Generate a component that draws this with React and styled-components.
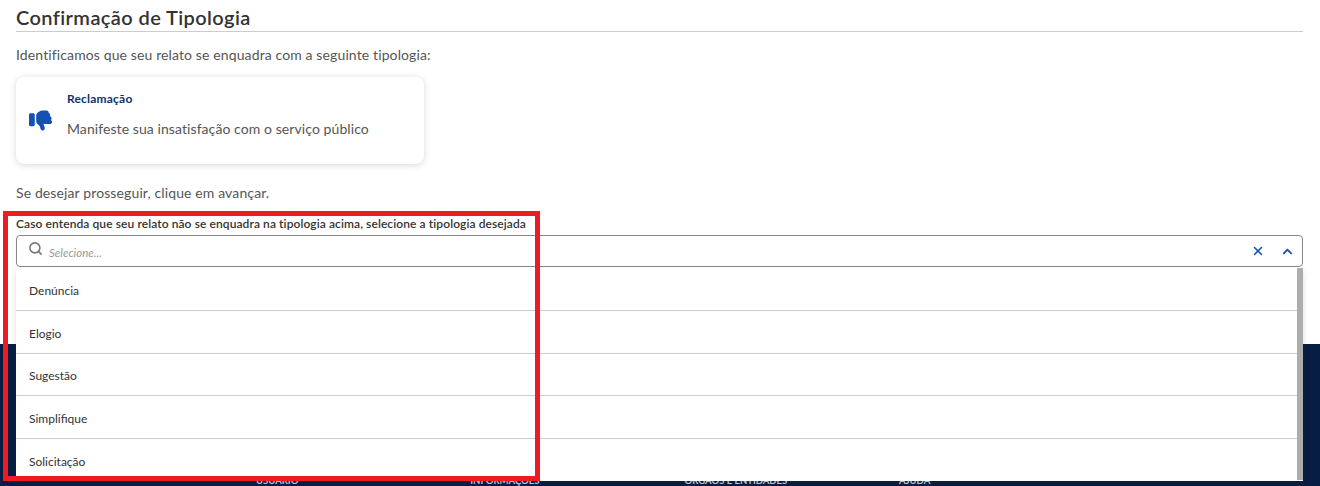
import React from 'react'
import styled, { createGlobalStyle } from 'styled-components'
import { FaThumbsDown } from 'react-icons/fa6'
import { FaChevronUp } from 'react-icons/fa'
import { Search, X } from 'lucide-react'

const GlobalStyle = createGlobalStyle`
  html, body {
    margin: 0;
    padding: 0;
    height: 486px;
    overflow: hidden;
    background: #fff;
    font-family: 'Lato', 'Open Sans', sans-serif;
    color: #333;
  }
  * { box-sizing: border-box; }
`

const Page = styled.div`
  position: relative;
  width: 1320px;
  height: 486px;
  overflow: hidden;
`

const Main = styled.main`
  height: 344px;
  padding: 5px 17px 0 16px;
`

const Title = styled.h2`
  margin: 0;
  height: 27px;
  border-bottom: 1px solid #ccc;
  font-size: 20px;
  line-height: 24px;
  font-weight: 600;
  letter-spacing: 0.4px;
  color: #333;
`

const Text = styled.p`
  margin: ${p => p.$margin};
  font-size: 14px;
  line-height: 20px;
  letter-spacing: 0.12px;
  color: #555;
`

const Card = styled.div`
  display: flex;
  align-items: center;
  width: 408px;
  height: 87px;
  margin-top: 12px;
  padding: 0 13px;
  background: #fff;
  border-radius: 8px;
  box-shadow: 0 1px 6px rgba(51, 51, 51, 0.2);
`

const CardIcon = styled(FaThumbsDown)`
  flex: none;
  width: 23px;
  height: 23px;
  margin-right: 15px;
  color: #1351b4;
`

const CardBody = styled.div`
  display: flex;
  flex-direction: column;
  height: 87px;
  padding-top: 14px;
`

const CardTitle = styled.span`
  font-size: 12px;
  line-height: 16px;
  font-weight: 700;
  letter-spacing: 0.2px;
  color: #0c326f;
`

const CardText = styled.span`
  margin-top: 12px;
  font-size: 14px;
  line-height: 20px;
  letter-spacing: 0.08px;
  color: #555;
`

const Field = styled.div`
  position: relative;
  margin-top: 12px;
`

const Label = styled.label`
  display: block;
  height: 20px;
  font-size: 12px;
  line-height: 17px;
  font-weight: 600;
  letter-spacing: 0.09px;
  color: #333;
`

const InputBox = styled.div`
  display: flex;
  align-items: center;
  height: 32px;
  padding: 0 9.5px 0 13px;
  border: 1px solid #888;
  border-radius: 4px;
  background: #fff;
`

const SearchIcon = styled(Search)`
  flex: none;
  width: 15px;
  height: 15px;
  margin: -5px 5px 0 -2px;
  color: #777;
`

const Placeholder = styled.span`
  flex: 1;
  padding: 3px 0 0 1px;
  font-size: 11.5px;
  font-style: italic;
  color: #999;
`

const IconButton = styled.span`
  display: flex;
  margin-left: ${p => p.$gap || 0}px;
  color: #1351b4;
  font-size: ${p => p.$size}px;
`

const Menu = styled.ul`
  position: absolute;
  top: 53px;
  left: 0;
  right: 0;
  height: 213px;
  margin: 0;
  padding: 0 6px 0 0;
  list-style: none;
  overflow: hidden;
  background: #fff;
  box-shadow: 0 3px 6px rgba(51, 51, 51, 0.16);
  z-index: 2;
`

const Scrollbar = styled.span`
  position: absolute;
  top: 0;
  right: 0;
  bottom: 1px;
  width: 6px;
  background: #adadad;
`

const Option = styled.li`
  display: flex;
  align-items: center;
  height: 42.75px;
  padding: 3px 13px 0;
  border-bottom: 1px solid #ccc;
  font-size: 12px;
  color: #333;
  &:last-of-type { border-bottom: 0; }
`

const Footer = styled.footer`
  height: 142px;
  background: #071d41;
  padding: 130px 0 0 256px;
  display: flex;
`

const FooterHead = styled.span`
  width: 214.3px;
  font-size: 9.5px;
  line-height: 14px;
  font-weight: 700;
  color: #c5d4eb;
  text-transform: uppercase;
`

const Highlight = styled.div`
  position: absolute;
  left: 3px;
  top: 211px;
  width: 537px;
  height: 270px;
  border: 5px solid #ed1c24;
  pointer-events: none;
  z-index: 3;
`

const options = ['Denúncia', 'Elogio', 'Sugestão', 'Simplifique', 'Solicitação']
const footerHeads = ['Usuário', 'Informações', 'Órgãos e Entidades', 'Ajuda']

const App = () => {
  return (
    <Page>
      <GlobalStyle />
      <Main>
        <Title>Confirmação de Tipologia</Title>
        <Text $margin="13px 0 0">Identificamos que seu relato se enquadra com a seguinte tipologia:</Text>
        <Card>
          <CardIcon />
          <CardBody>
            <CardTitle>Reclamação</CardTitle>
            <CardText>Manifeste sua insatisfação com o serviço público</CardText>
          </CardBody>
        </Card>
        <Text $margin="19px 0 0">Se desejar prosseguir, clique em avançar.</Text>
        <Field>
          <Label>Caso entenda que seu relato não se enquadra na tipologia acima, selecione a tipologia desejada</Label>
          <InputBox>
            <SearchIcon strokeWidth={2.5} />
            <Placeholder>Selecione...</Placeholder>
            <IconButton $size={14}><X size={14} strokeWidth={2.6} /></IconButton>
            <IconButton $size={11} $gap={16.5}><FaChevronUp /></IconButton>
          </InputBox>
          <Menu>
            {options.map(o => <Option key={o}>{o}</Option>)}
            <Scrollbar />
          </Menu>
        </Field>
      </Main>
      <Footer>
        {footerHeads.map(h => <FooterHead key={h}>{h}</FooterHead>)}
      </Footer>
      <Highlight />
    </Page>
  )
}

export default App
